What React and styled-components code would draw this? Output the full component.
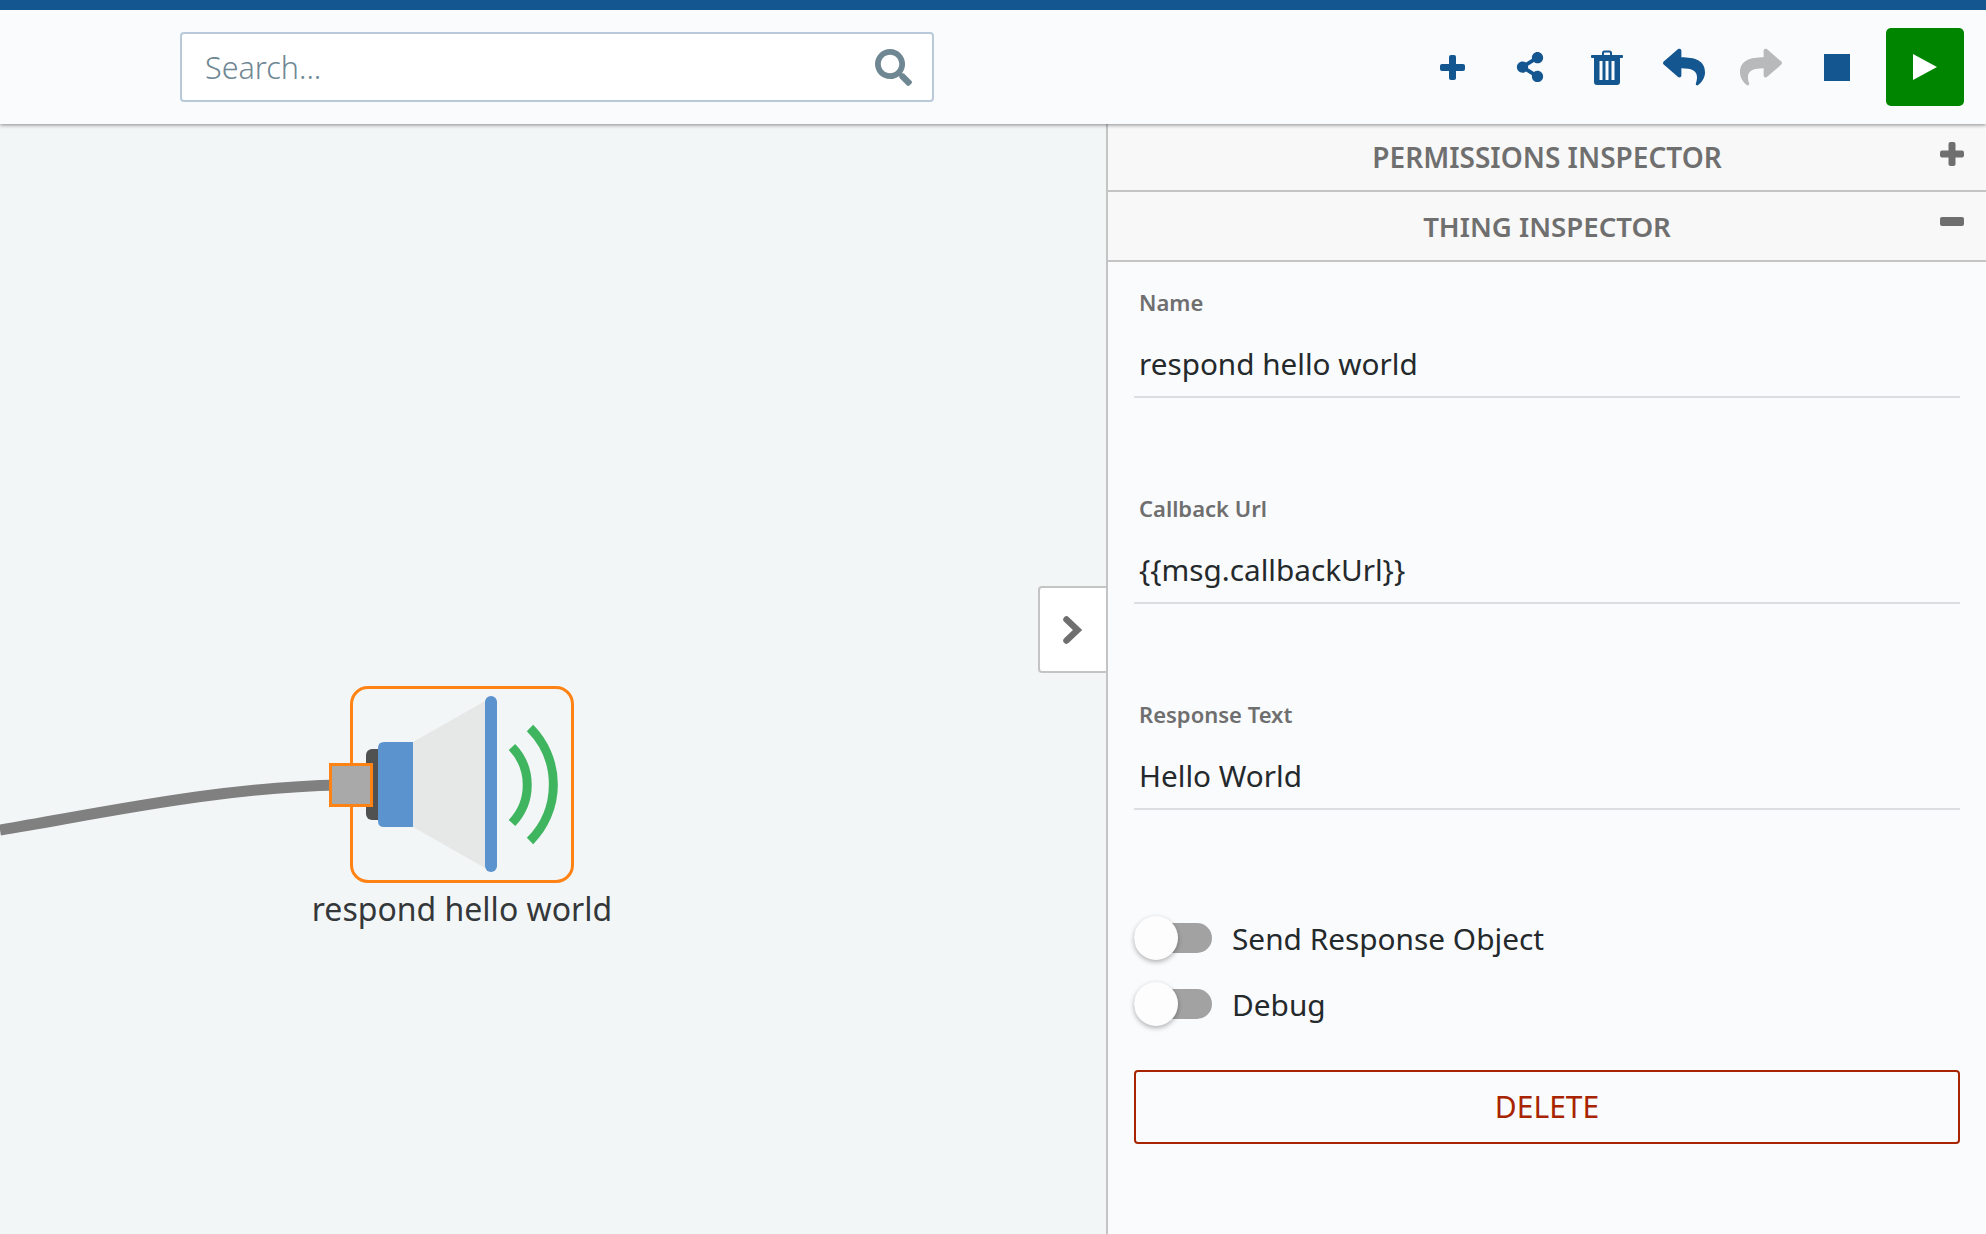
import React from "react";
import styled, { createGlobalStyle } from "styled-components";
import { FaShareAlt, FaReply, FaShare, FaSearch } from "react-icons/fa";

const Global = createGlobalStyle`
  html, body { margin: 0; padding: 0; height: 100%; }
  body { font-family: "Noto Sans", "Open Sans", sans-serif; background: #f3f6f7; overflow: hidden; }
  * { box-sizing: border-box; }
`;

const Page = styled.div`
  display: flex;
  flex-direction: column;
  height: 1234px;
`;

const Header = styled.header`
  position: relative;
  z-index: 2;
  flex: none;
  display: flex;
  align-items: center;
  height: 124px;
  padding: 0 22px 0 180px;
  border-top: 10px solid #14568f;
  background: #fafbfd;
  box-shadow: 0 1px 4px rgba(0, 0, 0, 0.45);
`;

const Search = styled.div`
  display: flex;
  align-items: center;
  justify-content: space-between;
  width: 754px;
  height: 70px;
  padding: 0 20px 0 23px;
  background: #fff;
  border: 2px solid #b8cad9;
  border-radius: 4px;
`;

const Placeholder = styled.span`
  font-size: 30.5px;
  font-weight: 300;
  color: #6f8793;
`;

const SearchIcon = styled(FaSearch)`
  width: 37px;
  height: 37px;
  color: #6f8793;
`;

const Tools = styled.div`
  display: flex;
  align-items: center;
  margin-left: auto;
`;

const Tool = styled.button`
  display: flex;
  align-items: center;
  justify-content: center;
  width: 77px;
  height: 78px;
  padding: 0;
  border: 0;
  background: none;
  color: ${(p) => (p.$off ? "#b8b9ba" : "#14568f")};
`;

const Run = styled.button`
  display: flex;
  align-items: center;
  justify-content: center;
  width: 78px;
  height: 78px;
  margin-left: 10px;
  padding: 0;
  border: 0;
  border-radius: 5px;
  background: #008500;
`;

const Stop = styled.span`
  display: block;
  width: 26px;
  height: 27px;
  margin-right: 2px;
  background: #14568f;
`;

const Main = styled.main`
  flex: 1;
  display: flex;
  min-height: 0;
`;

const Canvas = styled.section`
  position: relative;
  flex: 1;
  background: #f3f6f7;
`;

const Wire = styled.svg`
  position: absolute;
  left: 0;
  top: 640px;
`;

const Node = styled.div`
  position: absolute;
  left: 350px;
  top: 562px;
  width: 224px;
  height: 197px;
  border: 3px solid #ff8214;
  border-radius: 18px;
`;

const NodeArt = styled.svg`
  position: absolute;
  left: -3px;
  top: -2px;
`;

const Port = styled.div`
  position: absolute;
  left: -24px;
  top: 74px;
  width: 44px;
  height: 44px;
  border: 3px solid #ff8214;
  background: #a9a9a9;
`;

const NodeLabel = styled.div`
  position: absolute;
  left: 50%;
  top: 199px;
  transform: translateX(-50%);
  font-size: 32px;
  line-height: 42px;
  white-space: nowrap;
  color: #35383a;
`;

const Collapse = styled.button`
  position: absolute;
  right: -2px;
  top: 462px;
  display: flex;
  align-items: center;
  justify-content: center;
  width: 70px;
  height: 87px;
  padding: 0;
  background: #fff;
  border: 2px solid #c4c4c4;
  border-radius: 4px 0 0 4px;
  color: #6f6f6f;
`;

const Panel = styled.aside`
  position: relative;
  z-index: 1;
  flex: none;
  width: 880px;
  background: #fafbfd;
  border-left: 2px solid #c4c4c4;
`;

const Section = styled.div`
  position: relative;
  display: flex;
  align-items: center;
  justify-content: center;
  height: ${(p) => p.$h}px;
  background: #f8f8f8;
  border-bottom: 2px solid #c4c4c4;
  font-size: 28px;
  font-weight: 600;
  color: #6f6f6f;
`;

const SectionTitle = styled.span`
  font-size: ${(p) => p.$size || 28}px;
`;

const SectionIcon = styled.span`
  position: absolute;
  right: 22px;
  top: ${(p) => p.$top}px;
  display: flex;
  color: #6f6f6f;
`;

const Form = styled.div`
  padding: 0 26px 0 26px;
`;

const Field = styled.div`
  height: 206px;
  padding-top: 24px;
`;

const FieldLabel = styled.div`
  padding-left: 5px;
  font-size: 22px;
  line-height: 32px;
  font-weight: 600;
  color: #6f6f6f;
`;

const FieldValue = styled.div`
  height: 63px;
  margin-top: 17px;
  padding: 8px 0 0 5px;
  font-size: 29.7px;
  line-height: 42px;
  color: #24292c;
  border-bottom: 2px solid #dcdfe2;
`;

const Toggles = styled.div`
  display: flex;
  flex-direction: column;
  gap: 22px;
  margin-top: 36px;
`;

const ToggleRow = styled.div`
  display: flex;
  align-items: center;
  height: 44px;
  font-size: 29.8px;
  color: #24292c;
`;

const Track = styled.span`
  position: relative;
  display: block;
  width: 78px;
  height: 30px;
  margin-right: 20px;
  background: #a2a2a2;
  border-radius: 15px;
`;

const Knob = styled.span`
  position: absolute;
  left: 0;
  top: -7px;
  width: 44px;
  height: 44px;
  border-radius: 50%;
  background: #fdfdfd;
  box-shadow: 0 2px 5px rgba(0, 0, 0, 0.3);
`;

const Delete = styled.button`
  display: block;
  width: 100%;
  height: 74px;
  margin-top: 44px;
  padding: 0 0 2px;
  background: none;
  border: 2px solid #a82400;
  border-radius: 4px;
  font-family: inherit;
  font-size: 30px;
  color: #a82400;
`;

function PlusIcon({ size = 25, bar = 7 }) {
  const off = (size - bar) / 2;
  return (
    <svg width={size} height={size} viewBox={`0 0 ${size} ${size}`} fill="currentColor">
      <rect x={off} y="0" width={bar} height={size} rx="2" />
      <rect x="0" y={off} width={size} height={bar} rx="2" />
    </svg>
  );
}

function MinusIcon() {
  return (
    <svg width="24" height="9" viewBox="0 0 24 9" fill="currentColor">
      <rect width="24" height="9" rx="2" />
    </svg>
  );
}

function ChevronIcon() {
  return (
    <svg width="20" height="28" viewBox="0 0 20 28" fill="none" stroke="currentColor" strokeWidth="6.5" strokeLinecap="round" strokeLinejoin="miter">
      <path d="M3.5 3.5 L14.5 14 L3.5 24.5" />
    </svg>
  );
}

function TrashIcon() {
  return (
    <svg width="32" height="35" viewBox="0 0 32 35" fill="#14568f">
      <path d="M11 5 V3 Q11 0.5 13.5 0.5 H18.5 Q21 0.5 21 3 V5 H19 V3 Q19 2.5 18.5 2.5 H13.5 Q13 2.5 13 3 V5 Z" />
      <rect x="0" y="5" width="32" height="3" rx="1" />
      <path fillRule="evenodd" d="M3 8 H29 V32 Q29 35 26 35 H6 Q3 35 3 32 Z M8.5 11 V30 H11.5 V11 Z M14.5 11 V30 H17.5 V11 Z M20.5 11 V30 H23.5 V11 Z" />
    </svg>
  );
}

function Toggle({ label }) {
  return (
    <ToggleRow>
      <Track>
        <Knob />
      </Track>
      {label}
    </ToggleRow>
  );
}

const fields = [
  ["Name", "respond hello world"],
  ["Callback Url", "{{msg.callbackUrl}}"],
  ["Response Text", "Hello World"],
];

export default function App() {
  return (
    <Page>
      <Global />
      <Header>
        <Search>
          <Placeholder>Search...</Placeholder>
          <SearchIcon />
        </Search>
        <Tools>
          <Tool><PlusIcon /></Tool>
          <Tool><FaShareAlt size={30} /></Tool>
          <Tool><TrashIcon /></Tool>
          <Tool><FaReply size={42} /></Tool>
          <Tool $off><FaShare size={42} /></Tool>
          <Tool><Stop /></Tool>
          <Run>
            <svg width="26" height="28" viewBox="0 0 26 28"><path d="M1 1 L25 14 L1 27 Z" fill="#fff" /></svg>
          </Run>
        </Tools>
      </Header>
      <Main>
        <Canvas>
          <Wire width="340" height="90" viewBox="0 0 340 90">
            <path d="M0 66 C 100 49.5 220 23 340 21" fill="none" stroke="#808080" strokeWidth="11" />
          </Wire>
          <Node>
            <NodeArt width="224" height="196" viewBox="0 0 224 196">
              <rect x="16" y="62" width="20" height="71" rx="6" fill="#505252" />
              <polygon points="63,55 135,14 135,181 63,140" fill="#e6e8e8" />
              <path d="M34 55 H63 V140 H34 Q28 140 28 134 V61 Q28 55 34 55 Z" fill="#5a93cd" />
              <rect x="135" y="9" width="12" height="176" rx="6" fill="#5a93cd" />
              <path d="M162 60 A 55 55 0 0 1 162 136" fill="none" stroke="#40b560" strokeWidth="9" />
              <path d="M180 41 A 80 80 0 0 1 180 154" fill="none" stroke="#40b560" strokeWidth="9" />
            </NodeArt>
            <Port />
            <NodeLabel>respond hello world</NodeLabel>
          </Node>
          <Collapse><ChevronIcon /></Collapse>
        </Canvas>
        <Panel>
          <Section $h={68}>
            <SectionTitle>PERMISSIONS INSPECTOR</SectionTitle>
            <SectionIcon $top={18}><PlusIcon size={24} /></SectionIcon>
          </Section>
          <Section $h={70}>
            <SectionTitle $size={27.6}>THING INSPECTOR</SectionTitle>
            <SectionIcon $top={25}><MinusIcon /></SectionIcon>
          </Section>
          <Form>
            {fields.map(([label, value]) => (
              <Field key={label}>
                <FieldLabel>{label}</FieldLabel>
                <FieldValue>{value}</FieldValue>
              </Field>
            ))}
            <Toggles>
              <Toggle label="Send Response Object" />
              <Toggle label="Debug" />
            </Toggles>
            <Delete>DELETE</Delete>
          </Form>
        </Panel>
      </Main>
    </Page>
  );
}
